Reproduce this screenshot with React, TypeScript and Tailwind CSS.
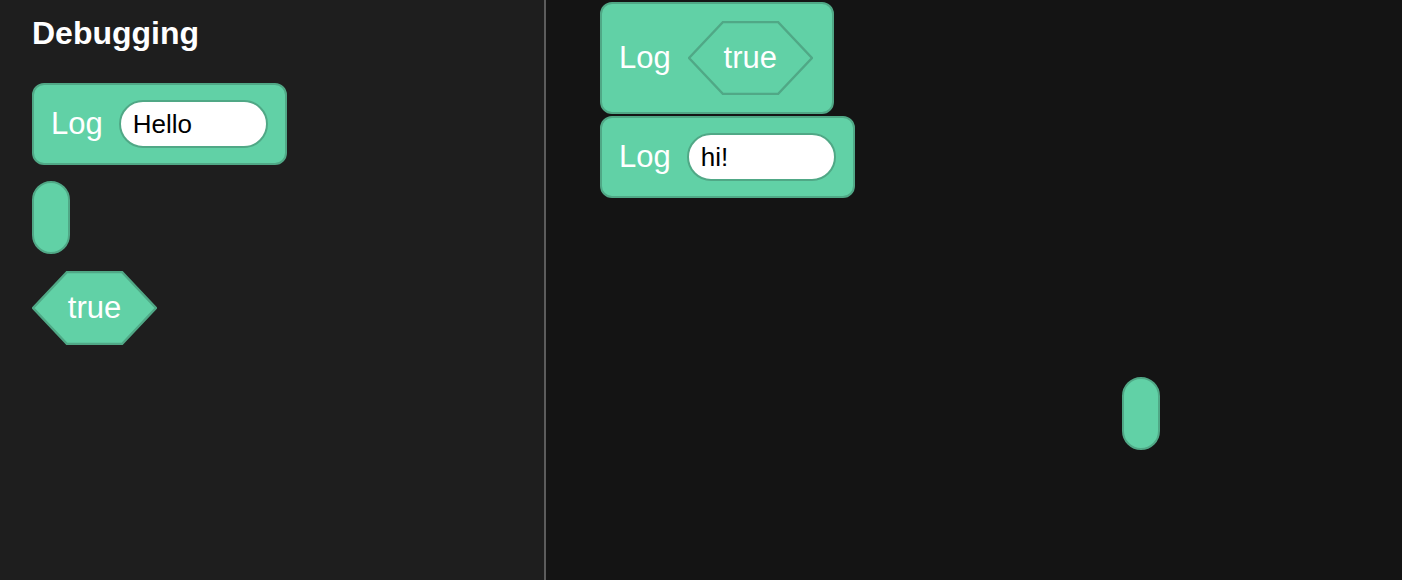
import React from "react";

const font = { fontFamily: '"Liberation Sans", Arial, sans-serif' };

const Hex = ({ label }: { label: string }) => (
  <div className="relative w-[125px] h-[74px] shrink-0">
    <svg width="125" height="74" viewBox="0 0 125 74" className="absolute inset-0">
      <polygon
        points="1,37 35,1 90,1 124,37 90,73 35,73"
        fill="#61d1a6"
        stroke="#50a886"
        strokeWidth="2.5"
        strokeLinejoin="round"
      />
    </svg>
    <div className="relative flex h-full items-center justify-center text-[31px] text-white">
      {label}
    </div>
  </div>
);

const TextInput = ({ value }: { value: string }) => (
  <div className="flex h-[48px] w-[149px] shrink-0 items-center rounded-full border-2 border-[#50a886] bg-white px-[12px] text-[26px] text-black">
    {value}
  </div>
);

const LogBlock = ({ children, tall }: { children: React.ReactNode; tall?: boolean }) => (
  <div
    className={
      "flex w-fit items-center rounded-[12px] border-2 border-[#50a886] bg-[#61d1a6] pl-[17px] " +
      (tall ? "gap-[17px] py-[17px] pr-[19px]" : "gap-[16px] py-[15px] pr-[17px]")
    }
  >
    <span className="text-[31px] text-white">Log</span>
    {children}
  </div>
);

const Pill = () => (
  <div className="h-[73px] w-[38px] rounded-full border-2 border-[#50a886] bg-[#61d1a6]" />
);

export default function App() {
  return (
    <div className="flex h-[580px] w-[1402px] overflow-hidden" style={font}>
      <aside className="flex w-[544px] shrink-0 flex-col items-start gap-4 bg-[#1e1e1e] px-8 pt-4">
        <h2 className="mb-[17px] text-[32px] font-bold leading-[34px] text-white">Debugging</h2>
        <LogBlock>
          <TextInput value="Hello" />
        </LogBlock>
        <Pill />
        <div className="pt-px">
          <Hex label="true" />
        </div>
      </aside>
      <div className="w-[2px] shrink-0 bg-[#5c5c5c]" />
      <main className="relative flex-1 bg-[#141414]">
        <div className="absolute left-[54px] top-[2px] flex flex-col gap-[2px]">
          <LogBlock tall>
            <Hex label="true" />
          </LogBlock>
          <LogBlock>
            <TextInput value="hi!" />
          </LogBlock>
        </div>
        <div className="absolute left-[576px] top-[377px]">
          <Pill />
        </div>
      </main>
    </div>
  );
}
